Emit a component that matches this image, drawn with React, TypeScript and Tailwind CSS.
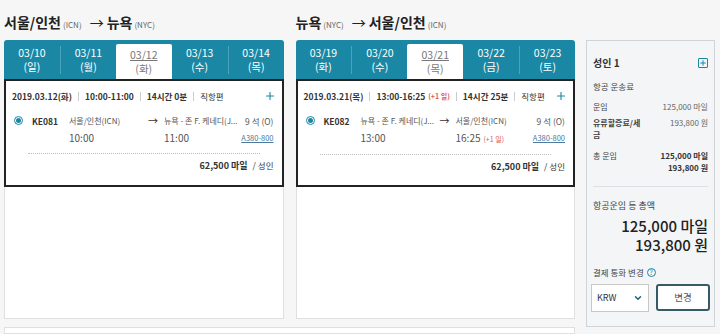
import { Plus, ChevronDown } from 'lucide-react';

const FONT = { fontFamily: '"Noto Sans CJK KR", "Liberation Sans", sans-serif' };

interface Tab {
  date: string;
  day: string;
  active?: boolean;
}

interface LegProps {
  from: string;
  fromCode: string;
  to: string;
  toCode: string;
  tabs: Tab[];
  date: string;
  time: string;
  nextDay?: boolean;
  duration: string;
  flight: string;
  depCity: string;
  arrCity: string;
  depTime: string;
  arrTime: string;
}

function NextDay() {
  return <span className="text-[7px] text-[#e05a4a] ml-[3px]">(+1 일)</span>;
}

function Leg(p: LegProps) {
  return (
    <div className="flex flex-col w-[280px]">
      <div className="h-[40px] pt-[12px] flex items-baseline text-[#222]">
        <span className="text-[14px] font-semibold">{p.from}</span>
        <span className="text-[8px] text-[#666] ml-[2px]">({p.fromCode})</span>
        <span className="text-[14px] ml-[8px] mr-[3px]">→</span>
        <span className="text-[14px] font-semibold">{p.to}</span>
        <span className="text-[8px] text-[#666] ml-[2px]">({p.toCode})</span>
      </div>

      <div className="h-[39px] bg-[#1a87a5] rounded-t-[3px] flex">
        {p.tabs.map((t, i) => (
          <div key={t.date} className="flex-1 flex items-end">
            {t.active ? (
              <div className="w-full h-[35px] bg-white rounded-t-[2px] flex flex-col items-center justify-center text-[#777] text-[10.5px]">
                <div className="underline leading-[14px]">{t.date}</div>
                <div className="leading-[14px]">({t.day})</div>
              </div>
            ) : (
              <div className="w-full h-[39px] flex items-center">
                <div
                  className={`w-full h-[28px] flex flex-col items-center justify-center text-white text-[10.5px] ${
                    i > 0 && !p.tabs[i - 1].active ? 'border-l border-[#4aa3bb]' : ''
                  }`}
                >
                  <div className="leading-[14px]">{t.date}</div>
                  <div className="leading-[14px]">({t.day})</div>
                </div>
              </div>
            )}
          </div>
        ))}
      </div>

      <div className="bg-white border border-[#e0e0e0] border-t-0 h-[240px]">
        <div className="border-2 border-[#222] -mx-px h-[108px] flex flex-col">
          <div className="h-[30px] flex items-center px-[6px] text-[8.5px] text-[#333] font-semibold">
            <span>{p.date}</span>
            <span className="w-px h-[9px] bg-[#ccc] mx-[6px]" />
            <span>{p.time}</span>
            {p.nextDay && <NextDay />}
            <span className="w-px h-[9px] bg-[#ccc] mx-[6px]" />
            <span>{p.duration}</span>
            <span className="w-px h-[9px] bg-[#ccc] mx-[6px]" />
            <span className="font-normal">직항편</span>
            <Plus className="ml-auto w-[12px] h-[12px] text-[#1a87a5]" strokeWidth={2.2} />
          </div>
          <div className="flex px-[8px] pt-[4px] text-[8.5px] leading-[12px] text-[#555]">
            <div className="w-[18px] pt-[1px]">
              <span className="w-[9px] h-[9px] rounded-full border border-[#1a87a5] flex items-center justify-center">
                <span className="w-[5px] h-[5px] rounded-full bg-[#1a87a5]" />
              </span>
            </div>
            <div className="w-[37px] font-semibold text-[#333]">{p.flight}</div>
            <div className="w-[79px] flex flex-col gap-[5px] whitespace-nowrap">
              <div className="text-[8px]">{p.depCity}</div>
              <div className="text-[10px]">{p.depTime}</div>
            </div>
            <div className="w-[16px] text-[10px] text-[#333]">→</div>
            <div className="w-[74px] flex flex-col gap-[5px] whitespace-nowrap">
              <div className="text-[8px]">{p.arrCity}</div>
              <div className="text-[10px]">
                {p.arrTime}
                {p.nextDay && <NextDay />}
              </div>
            </div>
            <div className="flex-1 flex flex-col items-end gap-[5px] whitespace-nowrap">
              <div>9 석 (O)</div>
              <div className="underline text-[#4a7aa0] text-[7.5px]">A380-800</div>
            </div>
          </div>
          <div className="mx-[22px] mt-[9px] border-t border-dotted border-[#bbb]" />
          <div className="flex justify-end items-baseline px-[8px] pt-[5px] text-[#333]">
            <span className="text-[9px] font-semibold">62,500 마일</span>
            <span className="text-[8.5px] ml-[5px]">/ 성인</span>
          </div>
        </div>
      </div>
    </div>
  );
}

export default function App() {
  return (
    <div className="w-[720px] h-[334px] bg-[#f6f6f6] overflow-hidden flex pl-[4px]" style={FONT}>
      <div className="flex flex-col w-[571px]">
        <div className="flex gap-[12px]">
          <Leg
            from="서울/인천"
            fromCode="ICN"
            to="뉴욕"
            toCode="NYC"
            tabs={[
              { date: '03/10', day: '일' },
              { date: '03/11', day: '월' },
              { date: '03/12', day: '화', active: true },
              { date: '03/13', day: '수' },
              { date: '03/14', day: '목' },
            ]}
            date="2019.03.12(화)"
            time="10:00-11:00"
            duration="14시간 0분"
            flight="KE081"
            depCity="서울/인천(ICN)"
            arrCity="뉴욕 - 존 F. 케네디(J..."
            depTime="10:00"
            arrTime="11:00"
          />
          <Leg
            from="뉴욕"
            fromCode="NYC"
            to="서울/인천"
            toCode="ICN"
            tabs={[
              { date: '03/19', day: '화' },
              { date: '03/20', day: '수' },
              { date: '03/21', day: '목', active: true },
              { date: '03/22', day: '금' },
              { date: '03/23', day: '토' },
            ]}
            date="2019.03.21(목)"
            time="13:00-16:25"
            nextDay
            duration="14시간 25분"
            flight="KE082"
            depCity="뉴욕 - 존 F. 케네디(J..."
            arrCity="서울/인천(ICN)"
            depTime="13:00"
            arrTime="16:25"
          />
        </div>
        <div className="mt-[8px] h-[40px] bg-white border border-[#e0e0e0]" />
      </div>

      <div className="ml-[11px] mt-[40px] w-[129px] h-[287px] bg-[#f3f5f7] border border-[#cfd4d8] px-[6px] pt-[14px] text-[#444]">
        <div className="flex items-center justify-between">
          <span className="text-[10px] font-semibold text-[#333]">성인 1</span>
          <span className="w-[10px] h-[10px] border border-[#1a87a5] rounded-[1px] flex items-center justify-center">
            <Plus className="w-[8px] h-[8px] text-[#1a87a5]" strokeWidth={3} />
          </span>
        </div>
        <div className="text-[8.5px] mt-[10px]">항공 운송료</div>
        <div className="flex justify-between text-[8px] mt-[8px]">
          <span>운임</span>
          <span className="text-[#666]">125,000 마일</span>
        </div>
        <div className="flex justify-between text-[8px] mt-[4px] leading-[12px]">
          <span className="w-[48px] break-all font-semibold text-[#444]">유류할증료/세금</span>
          <span className="text-[#666]">193,800 원</span>
        </div>
        <div className="flex justify-between text-[8px] mt-[9px] leading-[12px]">
          <span>총 운임</span>
          <div className="flex flex-col items-end font-semibold text-[#333]">
            <div>125,000 마일</div>
            <div>193,800 원</div>
          </div>
        </div>
        <div className="border-t border-[#dde1e4] mt-[12px]" />
        <div className="text-[9px] mt-[12px]">항공운임 등 총액</div>
        <div className="flex flex-col items-end text-[15px] font-medium text-[#222] mt-[4px]">
          <div className="leading-[19px]">125,000 마일</div>
          <div className="leading-[19px]">193,800 원</div>
        </div>
        <div className="flex items-center text-[8.5px] mt-[12px]">
          <span>결제 통화 변경</span>
          <span className="ml-[3px] w-[9px] h-[9px] rounded-full border border-[#1a87a5] text-[#1a87a5] text-[7px] leading-none flex items-center justify-center">
            ?
          </span>
        </div>
        <div className="flex gap-[7px] mt-[5px] -mx-[2px]">
          <div className="w-[58px] h-[28px] bg-white border border-[#c8c8c8] flex items-center justify-between px-[5px] text-[9px] text-[#333]">
            <span>KRW</span>
            <ChevronDown className="w-[10px] h-[10px] text-[#1f5f7a]" strokeWidth={3.5} />
          </div>
          <div className="w-[54px] h-[27px] bg-white border-2 border-[#385a66] rounded-[3px] flex items-center justify-center text-[9.5px] text-[#555]">
            변경
          </div>
        </div>
      </div>
    </div>
  );
}
